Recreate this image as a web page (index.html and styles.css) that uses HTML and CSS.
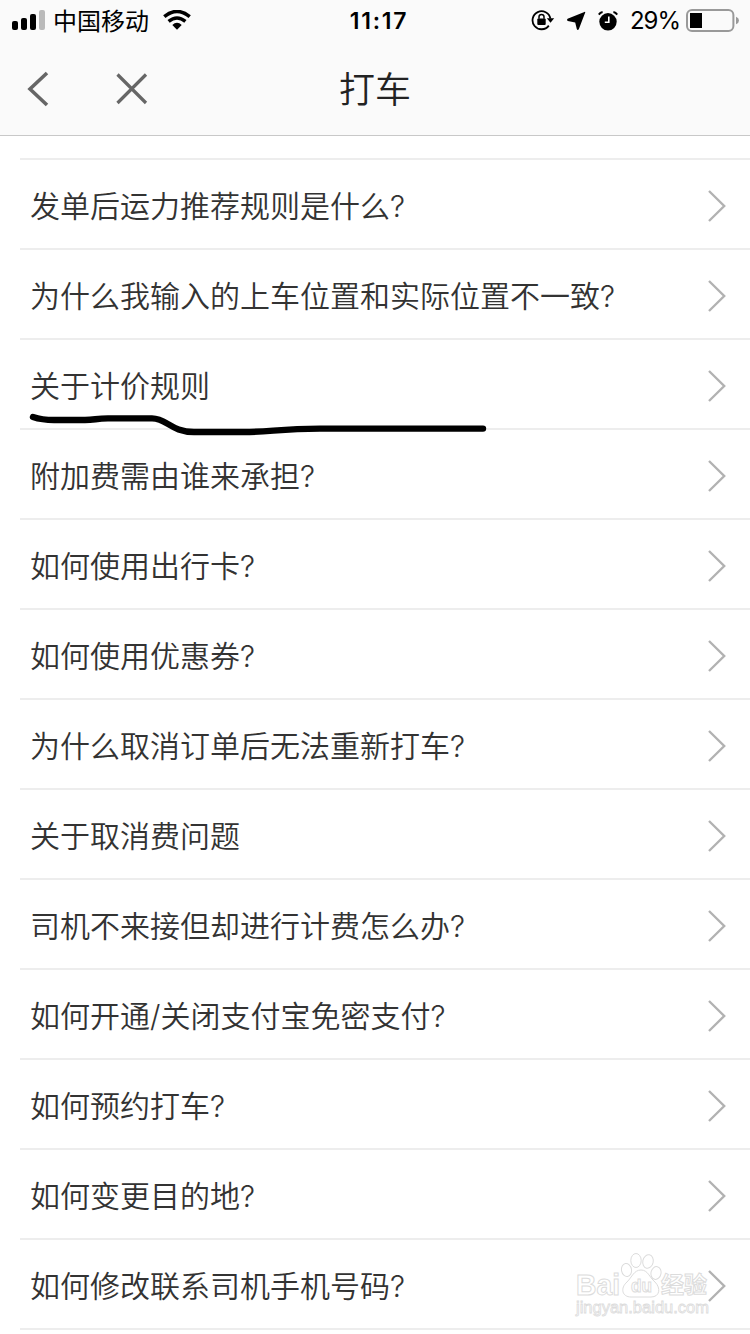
FILE: index.html
```html
<!DOCTYPE html>
<html lang="zh-CN">
<head>
    <meta charset="UTF-8">
    <meta name="viewport" content="width=device-width, initial-scale=1.0">
    <title>打车</title>
    <link rel="stylesheet" href="styles.css">
</head>
<body>
    <svg class="symbols" width="0" height="0">
        <symbol id="arrow" viewBox="0 0 20 34">
            <path d="M2 2 L17.2 17 L2 32" fill="none" stroke="#b2b2b2" stroke-width="2.4"/>
        </symbol>
    </svg>

    <header class="header">
        <div class="status-bar">
            <div class="status-left">
                <svg class="signal" width="34" height="20" viewBox="0 0 34 20">
                    <rect x="0" y="11" width="6" height="9" rx="2"/>
                    <rect x="9" y="8" width="6" height="12" rx="2"/>
                    <rect x="18" y="4" width="6" height="16" rx="2"/>
                    <rect x="27" y="0" width="6" height="20" rx="2" fill="#bababa"/>
                </svg>
                <span class="carrier">中国移动</span>
                <svg class="wifi" width="28" height="20" viewBox="0 0 28 20">
                    <path d="M1.3 6.7 Q14 -3.7 26.7 6.7" fill="none" stroke="#000" stroke-width="3.6"/>
                    <path d="M5.6 11.4 Q14 4.4 22.4 11.4" fill="none" stroke="#000" stroke-width="3.4"/>
                    <path d="M9.3 15 Q14 10.6 18.7 15 L14 19.7 Z"/>
                </svg>
            </div>
            <span class="time">11:17</span>
            <div class="status-right">
                <svg width="24" height="22" viewBox="0 0 24 22">
                    <path d="M17.8 16.6 A9 9 0 1 1 19.4 9.6" fill="none" stroke="#000" stroke-width="1.8"/>
                    <path d="M15.8 9.2 H23.2 L19.5 13.8 Z"/>
                    <rect x="6.3" y="9.4" width="8.4" height="6.6" rx="1"/>
                    <path d="M8 9.8 V7.8 Q8 5.4 10.5 5.4 Q13 5.4 13 7.8 V9.8" fill="none" stroke="#000" stroke-width="1.5"/>
                </svg>
                <svg class="location" width="20" height="20" viewBox="0 0 20 20">
                    <path d="M19.2 1.6 L12.8 18.2 Q11.6 19.8 10.8 18 L9.2 11.6 L1.8 9.9 Q0.2 9 1.6 7.8 L18.4 0.9 Q19.6 0.6 19.2 1.6 Z"/>
                </svg>
                <svg class="alarm" width="20" height="20" viewBox="0 0 20 20">
                    <circle cx="10" cy="10.8" r="8.7"/>
                    <path d="M0.8 3.6 Q2.2 1.4 4.6 1 M19.2 3.6 Q17.8 1.4 15.4 1" fill="none" stroke="#000" stroke-width="2"/>
                    <path d="M10.8 5.4 V11.2 H6.8" fill="none" stroke="#fff" stroke-width="1.6"/>
                </svg>
                <span class="percent">29%</span>
                <svg class="battery" width="54" height="24" viewBox="0 0 54 24">
                    <rect x="1" y="2" width="46.4" height="21" rx="5" fill="none" stroke="#999" stroke-width="2"/>
                    <rect x="4" y="5" width="12" height="15"/>
                    <path d="M50 8.8 Q53 10 53 12.5 Q53 15 50 16.2 Z" fill="#999"/>
                </svg>
            </div>
        </div>
        <div class="nav-bar">
            <div class="nav-buttons">
                <svg width="24" height="38" viewBox="0 0 24 38">
                    <path d="M20 3 L3 19 L20 35" fill="none" stroke="#666" stroke-width="3.6"/>
                </svg>
                <svg width="32" height="32" viewBox="0 0 32 32">
                    <path d="M1.5 1.5 L30 30 M30 1.5 L1.5 30" fill="none" stroke="#666" stroke-width="3.2"/>
                </svg>
            </div>
            <h1>打车</h1>
        </div>
    </header>

    <ul class="list">
        <li><span>发单后运力推荐规则是什么?</span><svg class="arrow"><use href="#arrow"/></svg></li>
        <li><span>为什么我输入的上车位置和实际位置不一致?</span><svg class="arrow"><use href="#arrow"/></svg></li>
        <li class="marked">
            <span>关于计价规则</span><svg class="arrow"><use href="#arrow"/></svg>
            <svg class="marker" width="470" height="30" viewBox="0 0 470 30">
                <path d="M13 7 Q22 10 34 10 H65 C75 10 76 8.4 88 8.4 H132 C147 8.4 151 22 174 22 H224 C250 22 260 18.6 300 18.6 H463"/>
            </svg>
        </li>
        <li><span>附加费需由谁来承担?</span><svg class="arrow"><use href="#arrow"/></svg></li>
        <li><span>如何使用出行卡?</span><svg class="arrow"><use href="#arrow"/></svg></li>
        <li><span>如何使用优惠券?</span><svg class="arrow"><use href="#arrow"/></svg></li>
        <li><span>为什么取消订单后无法重新打车?</span><svg class="arrow"><use href="#arrow"/></svg></li>
        <li><span>关于取消费问题</span><svg class="arrow"><use href="#arrow"/></svg></li>
        <li><span>司机不来接但却进行计费怎么办?</span><svg class="arrow"><use href="#arrow"/></svg></li>
        <li><span>如何开通/关闭支付宝免密支付?</span><svg class="arrow"><use href="#arrow"/></svg></li>
        <li><span>如何预约打车?</span><svg class="arrow"><use href="#arrow"/></svg></li>
        <li><span>如何变更目的地?</span><svg class="arrow"><use href="#arrow"/></svg></li>
        <li><span>如何修改联系司机手机号码?</span><svg class="arrow"><use href="#arrow"/></svg></li>
    </ul>

    <svg class="watermark" width="144" height="76" viewBox="0 0 144 76">
        <ellipse cx="56.5" cy="20" rx="5" ry="6.5" transform="rotate(-10 56.5 20)"/>
        <ellipse cx="66" cy="10.5" rx="5.2" ry="7"/>
        <ellipse cx="78" cy="11.5" rx="5.2" ry="6.8" transform="rotate(12 78 11.5)"/>
        <ellipse cx="86" cy="23" rx="5" ry="6.5" transform="rotate(12 86 23)"/>
        <path d="M71 20 C64 20 62 27 57 32 C50 38 52 47 61 47 H81 C90 47 91 38 85 32 C79 27 78 20 71 20 Z"/>
        <text class="wm-logo" x="6" y="45" textLength="44" lengthAdjust="spacingAndGlyphs">Bai</text>
        <text class="wm-du" x="61" y="42" textLength="21" lengthAdjust="spacingAndGlyphs">du</text>
        <text class="wm-cn" x="91" y="43">经验</text>
        <text class="wm-url" x="6" y="63" textLength="133" lengthAdjust="spacingAndGlyphs">jingyan.baidu.com</text>
    </svg>
</body>
</html>
```

FILE: styles.css
```css
* {
    margin: 0;
    padding: 0;
    box-sizing: border-box;
}

body {
    position: relative;
    height: 1334px;
    overflow: hidden;
    background: #fff;
    color: #333;
    font-family: Inter, "Noto Sans CJK SC", sans-serif;
}

svg {
    display: block;
    flex: none;
}

.symbols {
    position: absolute;
}

.header {
    height: 136px;
    background: #fafafa;
    border-bottom: 1px solid #c8c8c8;
}

.status-bar {
    display: grid;
    grid-template-columns: 1fr auto 1fr;
    align-items: center;
    height: 40px;
    padding: 0 10px 0 12px;
    color: #000;
}

.status-left,
.status-right {
    display: flex;
    align-items: center;
}

.status-right {
    justify-content: flex-end;
}

.carrier {
    margin: 0 14px 0 7px;
    font-family: "Noto Sans CJK SC", sans-serif;
    font-size: 24px;
    line-height: 36px;
}

.time {
    margin-left: 6px;
    padding-top: 2px;
    font-size: 23px;
    font-weight: 600;
    letter-spacing: 1.7px;
    line-height: 36px;
}

.location {
    margin: 2px 0 0 11px;
}

.alarm {
    margin: 1px 0 0 12px;
}

.percent {
    margin: 0 6px 0 12px;
    padding-top: 2px;
    font-size: 24px;
    letter-spacing: -1px;
    line-height: 36px;
}

.nav-bar {
    display: grid;
    grid-template-columns: 1fr auto 1fr;
    align-items: center;
    height: 95px;
    padding: 2px 27px 0;
}

.nav-buttons {
    display: flex;
    align-items: center;
    gap: 65px;
}

h1 {
    padding-top: 2px;
    color: #222;
    font-size: 36px;
    font-weight: 350;
    line-height: 50px;
}

.list {
    margin: 22px 0 0 20px;
    border-top: 2px solid #ededed;
    list-style: none;
}

.list li {
    display: flex;
    align-items: center;
    justify-content: space-between;
    height: 90px;
    padding: 4px 23px 0 10px;
    border-bottom: 2px solid #ededed;
    font-size: 30px;
    font-weight: 350;
    line-height: 44px;
}

.list .arrow {
    width: 20px;
    height: 34px;
}

.list .marked {
    position: relative;
}

.marker {
    position: absolute;
    left: 0;
    top: 70px;
    fill: none;
    stroke: #000;
    stroke-width: 6.4;
    stroke-linecap: round;
}

.watermark {
    position: absolute;
    left: 570px;
    top: 1250px;
    fill: #fff;
    stroke: #dcdcdc;
    stroke-width: 1;
}

.wm-logo {
    font: 700 29px "Liberation Sans", sans-serif;
}

.wm-du {
    font: 700 19px "Liberation Sans", sans-serif;
}

.wm-cn {
    font: 700 23px "Noto Sans CJK SC", sans-serif;
}

.wm-url {
    font: 400 16px "Liberation Sans", sans-serif;
    stroke-width: 0.8;
}
```
